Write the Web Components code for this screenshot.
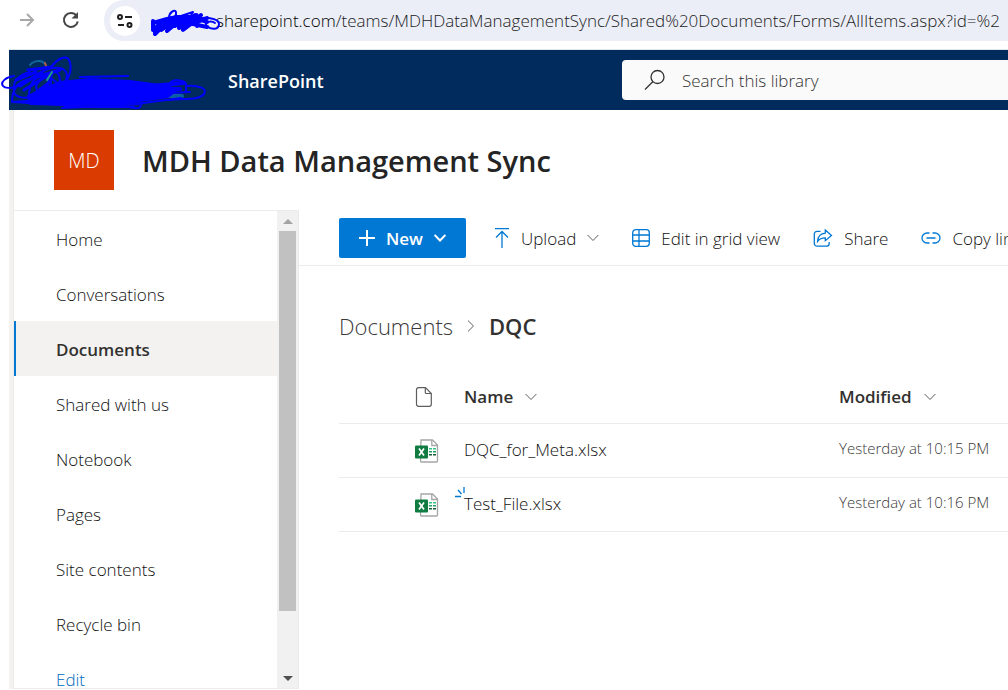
<!DOCTYPE html>
<html lang="en">
<head>
<meta charset="utf-8">
<title>DQC - MDH Data Management Sync</title>
<style>
  body {
    --blue: #0078d4;
    --line: #edebe9;
    margin: 0;
    height: 100vh;
    display: flex;
    flex-direction: column;
    overflow: hidden;
    background: #fff;
    color: #111;
    font: 300 17px/24px "Open Sans", "Noto Sans", sans-serif;
  }

  .page {
    flex: 1;
    min-height: 0;
    display: flex;
    flex-direction: column;
    margin: 0 0 1px 9px;
    border-left: 4px solid #f3f2f1;
  }

  .columns {
    flex: 1;
    min-height: 0;
    display: flex;
    border-left: 1px solid var(--line);
  }

  main {
    flex: 1;
    min-width: 0;
  }
</style>
</head>
<body>
<browser-bar host="sharepoint.com" path="/teams/MDHDataManagementSync/Shared%20Documents/Forms/AllItems.aspx?id=%2"></browser-bar>
<suite-header>SharePoint</suite-header>
<div class="page">
  <site-header initials="MD">MDH Data Management Sync</site-header>
  <div class="columns">
    <site-nav>
      <nav-item>Home</nav-item>
      <nav-item>Conversations</nav-item>
      <nav-item selected>Documents</nav-item>
      <nav-item>Shared with us</nav-item>
      <nav-item>Notebook</nav-item>
      <nav-item>Pages</nav-item>
      <nav-item>Site contents</nav-item>
      <nav-item>Recycle bin</nav-item>
      <nav-item edit>Edit</nav-item>
    </site-nav>
    <main>
      <command-bar>
        <command-button icon="plus" primary menu>New</command-button>
        <command-button icon="upload" menu>Upload</command-button>
        <command-button icon="grid">Edit in grid view</command-button>
        <command-button icon="share">Share</command-button>
        <command-button icon="link">Copy link</command-button>
      </command-bar>
      <bread-crumb parent="Documents">DQC</bread-crumb>
      <file-list></file-list>
    </main>
  </div>
</div>

<script>
const ICONS = {
  forward: [16, 16, `<path d="M1 8H14M8 2l6 6-6 6" stroke-width="2"/>`],
  reload: [18, 18, `<path d="M14.5 4.6A7 7 0 1 0 15.8 10.500" stroke-width="2"/><path d="M16 1v6.500H9.500z" fill="currentColor" stroke="none"/>`],
  tune: [16, 14, `<circle cx="3" cy="3" r="2" stroke-width="2"/><path d="M8 3h7M1 11h6" stroke-width="2"/><circle cx="12.500" cy="11" r="2" stroke-width="2"/>`],
  search: [22, 22, `<circle cx="13.500" cy="8" r="6.500" stroke-width="1.300"/><path d="M9 12.500L1 20.500" stroke-width="1.300"/>`],
  plus: [16, 16, `<path d="M8 0v16M0 8h16" stroke-width="2"/>`],
  upload: [16, 20, `<path d="M1 .6h14M8 20V4M2 9.500L8 3.500l6 6" stroke-width="1.300"/>`],
  grid: [18, 18, `<rect x=".7" y=".7" width="16.600" height="16.600" rx="3" stroke-width="1.300"/><path d="M1 6h16M1 12h16M7 1v16" stroke-width="1.300"/>`],
  share: [20, 18, `<path d="M7.500 2.300H4A2.700 2.700 0 0 0 1.300 5v9.500A2.700 2.700 0 0 0 4 17.200h9.500a2.700 2.700 0 0 0 2.700-2.700v-1.500" stroke-width="1.300"/><path d="M12.300 1l6.200 5.400-6.200 5.300V8.800C8.800 8.800 6.500 9.800 4.600 12.300 5 7.600 7.700 4.500 12.300 4.200z" stroke-width="1.300"/>`],
  link: [20, 12, `<path d="M8.500 1H6a5 5 0 0 0 0 10h2.500M11.500 1H14a5 5 0 0 1 0 10h-2.500M5.500 6h9" stroke-width="1.300"/>`],
  chevron: [12, 8, `<path d="M.6 1L6 6.500 11.400 1"/>`],
  next: [8, 12, `<path d="M1 .6L6.500 6 1 11.400"/>`],
  file: [18, 20, `<path d="M3.500.7h7L16.300 6.500v10.800a2 2 0 0 1-2 2H3.500a2 2 0 0 1-2-2V2.700a2 2 0 0 1 2-2z" stroke-width="1.200"/><path d="M10.300.7v4.800a1 1 0 0 0 1 1h5" stroke-width="1.200"/>`],
  excel: [24, 24, `<path d="M6 1h11.500L22.500 6v16a1 1 0 0 1-1 1H6.500a1 1 0 0 1-1-1z" fill="#fff" stroke="#a6a6a6" stroke-width="1.300"/><path d="M16.800 1v5.500h5.500" stroke="#a6a6a6" stroke-width="1.300"/><g stroke="none"><path fill="#33c481" d="M14 9h3v1.500h-3zm4 0h3v1.500h-3z"/><path fill="#21a366" d="M14 12h3v1.500h-3zm4 0h3v1.500h-3z"/><path fill="#185c37" d="M14 15h3v1.500h-3zm4 0h3v1.500h-3z"/><rect x="0" y="6.500" width="13" height="13" rx="1" fill="#107c41"/></g><path d="M4 9.500l5 7M9 9.500l-5 7" stroke="#fff" stroke-width="1.700"/>`],
  fresh: [10, 11, `<path d="M9 0v6M3 3l3.500 4M0 9.500h6" stroke-width="1.300"/>`]
};

class SpIcon extends HTMLElement {
  connectedCallback() {
    const [w, h, shape] = ICONS[this.getAttribute("name")];
    this.attachShadow({ mode: "open" }).innerHTML = /* html */`
    <style>
      :host { display: inline-flex; flex: none; }
      svg { fill: none; stroke: currentColor; }
    </style>
    <svg width="${w}" height="${h}" viewBox="0 0 ${w} ${h}" aria-hidden="true">${shape}</svg>
    `;
  }
}

class BrowserBar extends HTMLElement {
  static get styles() {
    return /* css */`
      :host {
        display: flex;
        align-items: flex-start;
        flex: none;
        height: 49px;
        box-sizing: border-box;
        padding-left: 18px;
      }

      button {
        display: flex;
        align-items: center;
        justify-content: center;
        padding: 0;
        border: 0;
        background: none;
        color: #474747;
        width: 18px;
        height: 40px;
      }

      .reload { margin: 0 24px 0 26px; }
      .forward { color: #a8a8a8; }

      .box {
        flex: 1;
        min-width: 0;
        display: flex;
        align-items: center;
        height: 41px;
        background: #ebeef7;
        border-radius: 20px 0 0 20px;
        padding-left: 6px;
      }

      .box button {
        flex: none;
        width: 30px;
        height: 30px;
        border-radius: 50%;
        background: #fff;
        color: #1f1f1f;
      }

      .scribble {
        flex: none;
        margin: 4px -5px 0 11px;
        position: relative;
      }

      label { color: #000; }

      input {
        flex: 1;
        min-width: 0;
        padding: 0;
        border: 0;
        background: none;
        color: #222;
        font: inherit;
      }
    `;
  }

  connectedCallback() {
    this.attachShadow({ mode: "open" }).innerHTML = /* html */`
    <style>${BrowserBar.styles}</style>
    <button class="forward" aria-label="Forward"><sp-icon name="forward"></sp-icon></button>
    <button class="reload" aria-label="Reload"><sp-icon name="reload"></sp-icon></button>
    <div class="box">
      <button aria-label="Site information"><sp-icon name="tune"></sp-icon></button>
      <svg class="scribble" width="70" height="30" viewBox="0 0 70 30" fill="none" stroke="#00f" stroke-width="3" stroke-linecap="round" stroke-linejoin="round" aria-hidden="true">
        <path d="M2 13v9l8-7-6 9 14-12-8 10 18-12-12 13 18-15M4 26l6-6M2 22l18-8 4 4 10-8-6 9 16-12-4 9 10-9-8 9 14-6M2 15l14-4 10-2 16 0 14 5M28 20l10-6-6 8 12-9 2 5M42 16l14 3" stroke-width="4"/>
        <path d="M18 10c0-6 6-9 7-6s-3 8-5 9M30 8l12-4-4 7 8-5 4 6" stroke-width="2"/>
        <path d="M44 12c8-4 24-2 24 4s-8 6-12 2 4-6 8-3" stroke-width="2"/>
      </svg>
      <label for="url">${this.getAttribute("host")}</label>
      <input id="url" value="${this.getAttribute("path")}">
    </div>
    `;
  }
}

class SuiteHeader extends HTMLElement {
  static get styles() {
    return /* css */`
      :host {
        display: flex;
        align-items: center;
        justify-content: space-between;
        flex: none;
        height: 60px;
        margin-left: 9px;
        border-top: 1px solid #e3e5e8;
        background: #002b5c;
        position: relative;
      }

      .name {
        margin-left: 219px;
        padding-top: 2px;
        color: #fff;
        font-size: 18px;
        font-weight: 600;
      }

      .scribble {
        position: absolute;
        left: -9px;
        top: 0;
      }

      .search {
        flex: none;
        box-sizing: border-box;
        width: calc(100% - 613px);
        display: flex;
        align-items: center;
        height: 40px;
        padding-left: 22px;
        gap: 16px;
        border-radius: 4px 0 0 4px;
        background: #fafafa;
        color: #323130;
      }

      input {
        flex: 1;
        min-width: 0;
        padding: 2px 0 0;
        border: 0;
        background: none;
        font: inherit;
      }

      input::placeholder { color: #333; }
    `;
  }

  connectedCallback() {
    this.attachShadow({ mode: "open" }).innerHTML = /* html */`
    <style>${SuiteHeader.styles}</style>
    <svg class="scribble" width="210" height="60" viewBox="0 0 210 60" fill="none" stroke="#00f" stroke-width="2" stroke-linecap="round" stroke-linejoin="round" aria-hidden="true">
      <path d="M30 15c4-5 12-5 15-1" stroke="#0e6a9e"/>
      <path d="M45 13l2 5" stroke="#b05a4a"/>
      <path d="M150 46h32" stroke="#0a5fa5" stroke-width="4"/>
      <path d="M28 46L60 32 90 29l40 2 30 4 18 4-10 8-28 4-60 4-50-1z" fill="#00f"/>
      <path d="M14 26C6 27 0 32 3 36s16 1 24-5 24-17 36-12c8 5 2 19-6 21s-8-18-2-18 8 16-4 20-22-4-8-14M52 16c4-6 14-12 17-6s2 18-6 24M12 52c0-8 2-18 14-22s22-6 30 2M12 52l30-2M30 22c-12 3-18 10-16 20s30 6 34-6-14-14-18 2 2 14 10 12"/>
      <path d="M16 30l20-8M20 36l22-14M24 40l26-16M34 44l16-12M28 20l24-3M32 28l28-8" stroke-width="3"/>
      <path d="M47 30l5-8" stroke="#1d9c8a"/>
      <path d="M80 27l48-1M80 30l48 4M13 52l50 3 80-2 38-5M62 58l80-4M64 57h70M141 53c1 8-8 5-22 2M170 34c2-6 14-4 16 0v8M186 36c12-1 22 2 18 8-6 7-20 4-34 6M100 46l70-8 10 0-30 6 40-2"/>
      <path d="M140 37l44-4M120 43l60-4" stroke-width="4"/>
    </svg>
    <span class="name"><slot></slot></span>
    <div class="search">
      <sp-icon name="search"></sp-icon>
      <input type="search" placeholder="Search this library" aria-label="Search this library">
    </div>
    `;
  }
}

class SiteHeader extends HTMLElement {
  connectedCallback() {
    this.attachShadow({ mode: "open" }).innerHTML = /* html */`
    <style>
      :host {
        display: flex;
        align-items: center;
        flex: none;
        gap: 28px;
        height: 100px;
        padding-left: 40px;
        border-left: 1px solid var(--line);
      }

      .logo {
        width: 60px;
        height: 60px;
        box-sizing: border-box;
        padding-top: 2px;
        display: flex;
        align-items: center;
        justify-content: center;
        background: #da3b01;
        color: #fff;
        font-size: 20px;
      }

      h1 {
        margin: 0;
        padding-top: 2px;
        color: #242424;
        font-size: 29px;
        line-height: 36px;
        font-weight: 600;
      }
    </style>
    <div class="logo">${this.getAttribute("initials")}</div>
    <h1><slot></slot></h1>
    `;
  }
}

class SiteNav extends HTMLElement {
  static get styles() {
    return /* css */`
      :host {
        display: flex;
        flex: none;
        width: 284px;
        border: solid var(--line);
        border-width: 1px 1px 1px 0;
      }

      nav {
        flex: 1;
        overflow: hidden;
      }

      .scrollbar {
        width: 21px;
        display: flex;
        flex-direction: column;
        align-items: center;
        background: #f1f1f1;
      }

      button {
        width: 17px;
        height: 20px;
        padding: 0;
        border: 0;
        background: none;
        color: #505050;
      }

      button:first-child { color: #a3a3a3; }

      svg {
        display: block;
        margin: auto;
      }

      .track {
        flex: 1;
        width: 17px;
      }

      .thumb {
        height: 87%;
        background: #c1c1c1;
      }
    `;
  }

  connectedCallback() {
    this.attachShadow({ mode: "open" }).innerHTML = /* html */`
    <style>${SiteNav.styles}</style>
    <nav><slot></slot></nav>
    <div class="scrollbar">
      <button aria-label="Scroll up"><svg width="10" height="5"><path d="M5 0l5 5H0z" fill="currentColor"/></svg></button>
      <div class="track"><div class="thumb"></div></div>
      <button aria-label="Scroll down"><svg width="10" height="5"><path d="M0 0h10L5 5z" fill="currentColor"/></svg></button>
    </div>
    `;
  }
}

class NavItem extends HTMLElement {
  connectedCallback() {
    this.attachShadow({ mode: "open" }).innerHTML = /* html */`
    <style>
      :host { display: block; }

      a {
        display: flex;
        align-items: center;
        height: 55px;
        box-sizing: border-box;
        padding: 2px 0 0 40px;
        border-left: 2px solid transparent;
        color: inherit;
        text-decoration: none;
      }

      :host([selected]) a {
        background: #f3f2f1;
        border-color: var(--blue);
        color: #323130;
        font-weight: 600;
      }

      :host([edit]) a { color: #006cbe; }
    </style>
    <a href="#"><slot></slot></a>
    `;
  }
}

class CommandBar extends HTMLElement {
  connectedCallback() {
    this.attachShadow({ mode: "open" }).innerHTML = /* html */`
    <style>
      :host {
        display: flex;
        align-items: center;
        gap: 28px;
        height: 55px;
        padding-left: 40px;
        border-bottom: 1px solid var(--line);
        overflow: hidden;
      }
    </style>
    <slot></slot>
    `;
  }
}

class CommandButton extends HTMLElement {
  connectedCallback() {
    const menu = this.hasAttribute("menu") ? `<sp-icon class="menu" name="chevron"></sp-icon>` : "";
    this.attachShadow({ mode: "open" }).innerHTML = /* html */`
    <style>
      :host { flex: none; }

      button {
        display: flex;
        align-items: center;
        gap: 11px;
        height: 40px;
        padding: 0 5px 0 0;
        border: 0;
        background: none;
        color: inherit;
        font: inherit;
        white-space: nowrap;
      }

      span { padding-top: 2px; }
      sp-icon { color: var(--blue); }
      .menu { color: #605e5c; }

      :host([primary]) button {
        padding: 0 20px;
        border-radius: 2px;
        background: var(--blue);
        color: #fff;
        font-weight: 600;
      }

      :host([primary]) sp-icon { color: #fff; }
      :host([primary]) .menu { stroke-width: 2; }
    </style>
    <button><sp-icon name="${this.getAttribute("icon")}"></sp-icon><span><slot></slot></span>${menu}</button>
    `;
  }
}

class BreadCrumb extends HTMLElement {
  connectedCallback() {
    this.attachShadow({ mode: "open" }).innerHTML = /* html */`
    <style>
      :host {
        display: flex;
        align-items: center;
        gap: 14px;
        padding: 43px 0 26px 40px;
        font-size: 22px;
        line-height: 34px;
      }

      a {
        color: #3b3a39;
        text-decoration: none;
      }

      sp-icon { color: #605e5c; }

      b {
        color: #323130;
        font-weight: 600;
      }
    </style>
    <a href="#">${this.getAttribute("parent")}</a>
    <sp-icon name="next"></sp-icon>
    <b><slot></slot></b>
    `;
  }
}

const FILES = [
  { name: "DQC_for_Meta.xlsx", modified: "Yesterday at 10:15 PM" },
  { name: "Test_File.xlsx", modified: "Yesterday at 10:16 PM", fresh: true }
];

class FileList extends HTMLElement {
  static get styles() {
    return /* css */`
      :host {
        display: block;
        padding-left: 40px;
      }

      table {
        width: 100%;
        table-layout: fixed;
        border-collapse: collapse;
      }

      .type { width: 125px; }
      .name { width: 375px; }

      th, td {
        height: 54px;
        box-sizing: border-box;
        padding: 0;
        border-bottom: 1px solid var(--line);
        text-align: left;
        white-space: nowrap;
      }

      th:first-child, td:first-child { padding-left: 76px; }
      th:first-child sp-icon, td:first-child sp-icon { vertical-align: middle; }

      th button {
        display: flex;
        align-items: center;
        gap: 12px;
        padding: 2px 0 0;
        border: 0;
        background: none;
        color: #323130;
        font: inherit;
        font-weight: 600;
      }

      button sp-icon, th sp-icon { color: #605e5c; }

      a {
        position: relative;
        color: inherit;
        text-decoration: none;
      }

      a sp-icon {
        position: absolute;
        left: -9px;
        top: -5px;
        color: var(--blue);
      }

      .date {
        color: #3b3a39;
        font-size: 15px;
        padding-bottom: 4px;
      }
    `;
  }

  connectedCallback() {
    const rows = FILES.map(({ name, modified, fresh }) => /* html */`
      <tr>
        <td><sp-icon name="excel"></sp-icon></td>
        <td><a href="#">${fresh ? `<sp-icon name="fresh"></sp-icon>` : ""}${name}</a></td>
        <td class="date">${modified}</td>
      </tr>`).join("");

    this.attachShadow({ mode: "open" }).innerHTML = /* html */`
    <style>${FileList.styles}</style>
    <table>
      <thead>
        <tr>
          <th class="type" aria-label="File type"><sp-icon name="file"></sp-icon></th>
          <th class="name"><button>Name <sp-icon name="chevron"></sp-icon></button></th>
          <th><button>Modified <sp-icon name="chevron"></sp-icon></button></th>
        </tr>
      </thead>
      <tbody>${rows}</tbody>
    </table>
    `;
  }
}

customElements.define("sp-icon", SpIcon);
customElements.define("browser-bar", BrowserBar);
customElements.define("suite-header", SuiteHeader);
customElements.define("site-header", SiteHeader);
customElements.define("site-nav", SiteNav);
customElements.define("nav-item", NavItem);
customElements.define("command-bar", CommandBar);
customElements.define("command-button", CommandButton);
customElements.define("bread-crumb", BreadCrumb);
customElements.define("file-list", FileList);
</script>
</body>
</html>
